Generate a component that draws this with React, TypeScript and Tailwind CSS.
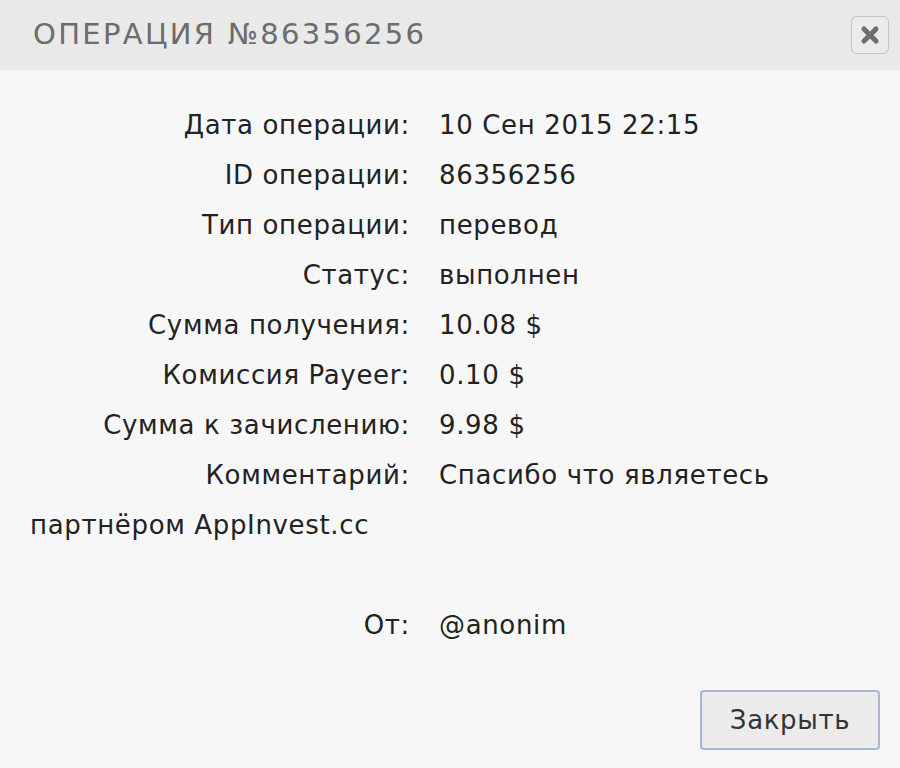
const rows: { label: string; value: string }[] = [
  { label: 'Дата операции:', value: '10 Сен 2015 22:15' },
  { label: 'ID операции:', value: '86356256' },
  { label: 'Тип операции:', value: 'перевод' },
  { label: 'Статус:', value: 'выполнен' },
  { label: 'Сумма получения:', value: '10.08 $' },
  { label: 'Комиссия Payeer:', value: '0.10 $' },
  { label: 'Сумма к зачислению:', value: '9.98 $' },
  { label: 'Комментарий:', value: 'Спасибо что являетесь' },
];

function Row({ label, value }: { label: string; value: string }) {
  return (
    <div className="grid h-[50px] grid-cols-[410px_1fr] items-center gap-[29px]">
      <div className="text-right">{label}</div>
      <div>{value}</div>
    </div>
  );
}

export default function App() {
  return (
    <div className="flex h-[768px] w-[900px] flex-col bg-[#f7f7f7] font-['DejaVu_Sans',sans-serif] text-[#222]">
      <div className="flex h-[70px] items-center justify-between bg-[#e9e9e9] pl-[33px] pr-[11px]">
        <h1 className="text-[29px] tracking-[0.08em] text-[#6c6c6c]">
          ОПЕРАЦИЯ №86356256
        </h1>
        <button className="flex h-[38px] w-[38px] items-center justify-center rounded-md border border-[#c2c2c2] bg-[#ebebeb]">
          <svg width="20" height="20" viewBox="0 0 20 20">
            <path d="M4 4 L16 16 M16 4 L4 16" stroke="#6e6e6e" strokeWidth="5" strokeLinecap="round" />
          </svg>
        </button>
      </div>

      <div className="flex flex-col pt-[30px] text-[26px] tracking-[0.025em]">
        {rows.map(r => (
          <Row key={r.label} label={r.label} value={r.value} />
        ))}
        <div className="flex h-[50px] items-center pl-[30px]">партнёром AppInvest.cc</div>
        <div className="h-[50px]" />
        <Row label="От:" value="@anonim" />

        <div className="flex justify-end pr-[20px] pt-[40px]">
          <button className="h-[60px] w-[180px] rounded-[4px] border-2 border-[#a7b6d6] bg-[#ebebeb] text-[26px] text-[#333]">
            Закрыть
          </button>
        </div>
      </div>
    </div>
  );
}
